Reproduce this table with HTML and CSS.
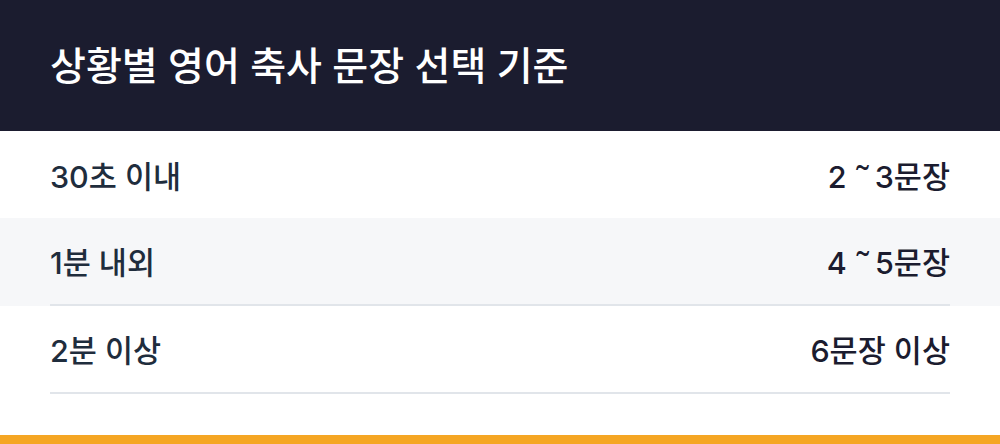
FILE: index.html
```html
<!DOCTYPE html>
<html lang="ko">
<head>
<meta charset="utf-8">
<link rel="stylesheet" href="styles.css">
</head>
<body>
<div class="card">
  <header class="head">
    <h1 class="title">상황별 영어 축사 문장 선택 기준</h1>
  </header>
  <ul class="rows">
    <li class="row">
      <div class="inner first"><span class="label">30초 이내</span><span class="value">2 <span class="tilde">˜</span>3문장</span></div>
    </li>
    <li class="row alt">
      <div class="inner"><span class="label">1분 내외</span><span class="value">4 <span class="tilde">˜</span>5문장</span></div>
    </li>
    <li class="row">
      <div class="inner"><span class="label">2분 이상</span><span class="value">6문장 이상</span></div>
    </li>
  </ul>
  <div class="spacer"></div>
  <div class="accent"></div>
</div>
</body>
</html>
```
FILE: styles.css
```css
* { box-sizing: border-box; }
html, body { margin: 0; padding: 0; background: #fff; }
body { font-family: Inter, "Noto Sans CJK KR", sans-serif; }
.card { width: 1000px; height: 444px; display: flex; flex-direction: column; overflow: hidden; }
.head { height: 131px; background: #1b1c2f; display: flex; align-items: center; padding: 0 50px 6px; }
.title { margin: 0; color: #fff; font-size: 39px; font-weight: 500; letter-spacing: 0; }
.rows { list-style: none; margin: 0; padding: 0; }
.row { padding: 0 50px; background: #fff; }
.row.alt { background: #f6f7f9; }
.inner { height: 88px; display: flex; justify-content: space-between; align-items: center; border-bottom: 2px solid #e1e5ea; font-size: 30.5px; font-weight: 500; }
.inner.first { height: 87px; border-bottom: none; }
.label { color: #1f2d3d; }
.value { color: #1b1c2f; }
.tilde { font-family: "Noto Sans CJK KR", sans-serif; font-size: 1.2em; line-height: 1; display: inline-block; margin: 0 6px 0 2px; transform: translateY(4px); }
.spacer { flex: 1; }
.accent { height: 9px; background: #f5a623; }
```
